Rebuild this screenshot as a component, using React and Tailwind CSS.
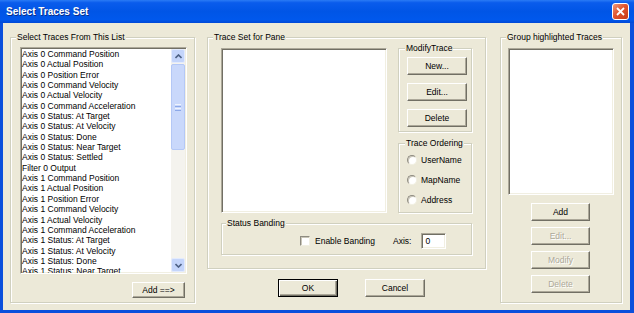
import React from "react";

const items = [
  "Axis 0 Command Position",
  "Axis 0 Actual Position",
  "Axis 0 Position Error",
  "Axis 0 Command Velocity",
  "Axis 0 Actual Velocity",
  "Axis 0 Command Acceleration",
  "Axis 0 Status: At Target",
  "Axis 0 Status: At Velocity",
  "Axis 0 Status: Done",
  "Axis 0 Status: Near Target",
  "Axis 0 Status: Settled",
  "Filter 0 Output",
  "Axis 1 Command Position",
  "Axis 1 Actual Position",
  "Axis 1 Position Error",
  "Axis 1 Command Velocity",
  "Axis 1 Actual Velocity",
  "Axis 1 Command Acceleration",
  "Axis 1 Status: At Target",
  "Axis 1 Status: At Velocity",
  "Axis 1 Status: Done",
  "Axis 1 Status: Near Target",
];

function Group({ label, className, labelClass, children }) {
  return (
    <div
      className={`relative border border-[#D0D0BF] shadow-[inset_1px_1px_0_#fff,1px_1px_0_#fff] ${className}`}
    >
      <span
        className={`absolute -top-[6px] bg-[#ECE9D8] px-[1px] leading-[10px] whitespace-nowrap ${labelClass}`}
      >
        {label}
      </span>
      {children}
    </div>
  );
}

function Btn({ children, className = "", disabled = false, isDefault = false }) {
  const border = isDefault
    ? "border border-black shadow-[inset_1px_1px_0_#fff,inset_-1px_-1px_0_#716F64,inset_-2px_-2px_0_#ACA899]"
    : "border border-t-white border-l-white border-r-[#716F64] border-b-[#716F64] shadow-[inset_-1px_-1px_0_#ACA899]";
  const text = disabled
    ? "text-[#ACA899] [text-shadow:1px_1px_0_#fff]"
    : "text-black";
  return (
    <div
      className={`flex items-center justify-center bg-[#ECE9D8] leading-[10px] ${border} ${text} ${className}`}
    >
      {children}
    </div>
  );
}

function Sunken({ className, children }) {
  return (
    <div
      className={`bg-white border border-t-[#ACA899] border-l-[#ACA899] border-r-white border-b-white shadow-[inset_1px_1px_0_#716F64,inset_-1px_-1px_0_#F1EFE2] ${className}`}
    >
      {children}
    </div>
  );
}

function Chevron({ up }) {
  return (
    <svg width="7" height="5" viewBox="0 0 7 5">
      <polyline
        points={up ? "0.5,4 3.5,1 6.5,4" : "0.5,1 3.5,4 6.5,1"}
        fill="none"
        stroke="#4D6185"
        strokeWidth="1.6"
      />
    </svg>
  );
}

function Radio({ label }) {
  return (
    <div className="flex items-center h-[20px]">
      <span className="w-[10px] h-[10px] rounded-full bg-white border border-t-[#8E8B80] border-l-[#8E8B80] border-r-[#F1EFE2] border-b-[#F1EFE2] shadow-[inset_1px_1px_0_#C9C6B8]" />
      <span className="ml-[4px] leading-[10px]">{label}</span>
    </div>
  );
}

export default function App() {
  return (
    <div className="w-[634px] h-[313px] bg-[#0A4FDC] flex flex-col overflow-hidden font-['Liberation_Sans',Arial,sans-serif] text-[8.5px] text-black">
      {/* Title bar */}
      <div className="h-[23px] flex items-center pl-[6px] pr-[5px] bg-[linear-gradient(#2A7BF5_0%,#0A5CEC_12%,#0055E6_50%,#0058EC_85%,#0048D6_100%)]">
        <span className="text-white font-bold text-[10px] leading-[12px] [text-shadow:1px_1px_0_#0A2F8A]">
          Select Traces Set
        </span>
        <div className="ml-auto w-[17px] h-[17px] rounded-[3px] border border-white flex items-center justify-center bg-[linear-gradient(135deg,#EE9A7C_0%,#E0552F_45%,#C83A16_100%)]">
          <svg width="9" height="9" viewBox="0 0 9 9">
            <line x1="1" y1="1" x2="8" y2="8" stroke="#fff" strokeWidth="1.8" />
            <line x1="8" y1="1" x2="1" y2="8" stroke="#fff" strokeWidth="1.8" />
          </svg>
        </div>
      </div>

      {/* Client */}
      <div className="flex-1 ml-[3px] mr-[4px] mb-[3px] bg-[#ECE9D8] flex items-start pl-[7px] pt-[14px]">
        {/* Left group */}
        <Group
          label="Select Traces From This List"
          labelClass="left-[5px]"
          className="w-[185px] h-[266px] flex flex-col items-start pt-[9px] pl-[9px]"
        >
          <Sunken className="w-[167px] h-[227px] flex overflow-hidden">
            <div className="flex-1 overflow-hidden pl-[1px] pt-[1px]">
              {items.map((t) => (
                <div key={t} className="leading-[10.35px] h-[10.35px] whitespace-nowrap">
                  {t}
                </div>
              ))}
            </div>
            <div className="w-[14px] flex flex-col bg-[#F4F3EE] mr-[1px] mt-[1px] mb-[1px]">
              <div className="h-[14px] rounded-[2px] bg-[#C4D5FB] border border-[#E3EBFD] flex items-center justify-center">
                <Chevron up />
              </div>
              <div className="h-[86px] mt-[1px] rounded-[2px] bg-[#C9D8FB] border border-[#B4C8F6] flex flex-col items-center justify-center gap-[1px]">
                <div className="w-[6px] h-[1px] bg-[#EEF3FE]" />
                <div className="w-[6px] h-[1px] bg-[#8CA8E8]" />
                <div className="w-[6px] h-[1px] bg-[#EEF3FE]" />
                <div className="w-[6px] h-[1px] bg-[#8CA8E8]" />
              </div>
              <div className="flex-1" />
              <div className="h-[14px] rounded-[2px] bg-[#C4D5FB] border border-[#E3EBFD] flex items-center justify-center">
                <Chevron />
              </div>
            </div>
          </Sunken>
          <Btn className="mt-[8px] ml-[112px] w-[53px] h-[16px]">Add ==&gt;</Btn>
        </Group>

        {/* Center column */}
        <div className="ml-[12px] w-[279px] flex flex-col">
          <Group
            label="Trace Set for Pane"
            labelClass="left-[5px]"
            className="w-[279px] h-[232px] flex flex-col pt-[10px] pl-[13px]"
          >
            <div className="flex items-start">
              <Sunken className="w-[166px] h-[165px]" />
              <div className="ml-[11px] w-[74px] flex flex-col">
                <Group
                  label="ModifyTrace"
                  labelClass="left-[6px]"
                  className="h-[84px] flex flex-col pt-[8px] pl-[8px] gap-[8px]"
                >
                  <Btn className="w-[60px] h-[18px]">New...</Btn>
                  <Btn className="w-[60px] h-[18px]">Edit...</Btn>
                  <Btn className="w-[60px] h-[18px]">Delete</Btn>
                </Group>
                <Group
                  label="Trace Ordering"
                  labelClass="left-[6px]"
                  className="mt-[11px] h-[70px] flex flex-col pt-[6px] pl-[8px]"
                >
                  <Radio label="UserName" />
                  <Radio label="MapName" />
                  <Radio label="Address" />
                </Group>
              </div>
            </div>
            <Group
              label="Status Banding"
              labelClass="left-[4px]"
              className="mt-[10px] w-[251px] h-[32px] flex items-start pt-[9px] pl-[78px]"
            >
              <div className="flex items-center h-[16px]">
                <span className="w-[10px] h-[10px] bg-white border border-t-[#8E8B80] border-l-[#8E8B80] border-r-[#F1EFE2] border-b-[#F1EFE2] shadow-[inset_1px_1px_0_#C9C6B8]" />
                <span className="ml-[5px] leading-[10px]">Enable Banding</span>
                <span className="ml-[18px] leading-[10px]">Axis:</span>
                <Sunken className="ml-[10px] w-[25px] h-[16px] flex items-center pl-[3px] leading-[10px]">
                  0
                </Sunken>
              </div>
            </Group>
          </Group>
          <div className="flex mt-[10px] pl-[71px]">
            <Btn isDefault className="w-[60px] h-[18px]">OK</Btn>
            <Btn className="ml-[27px] w-[60px] h-[18px]">Cancel</Btn>
          </div>
        </div>

        {/* Right group */}
        <Group
          label="Group highlighted Traces"
          labelClass="left-[5px]"
          className="ml-[14px] w-[122px] h-[266px] flex flex-col pt-[10px] pl-[7px]"
        >
          <Sunken className="w-[106px] h-[147px]" />
          <div className="mt-[8px] ml-[23px] flex flex-col gap-[6px]">
            <Btn className="w-[59px] h-[18px]">Add</Btn>
            <Btn disabled className="w-[59px] h-[18px]">Edit...</Btn>
            <Btn disabled className="w-[59px] h-[18px]">Modify</Btn>
            <Btn disabled className="w-[59px] h-[18px]">Delete</Btn>
          </div>
        </Group>
      </div>
    </div>
  );
}
